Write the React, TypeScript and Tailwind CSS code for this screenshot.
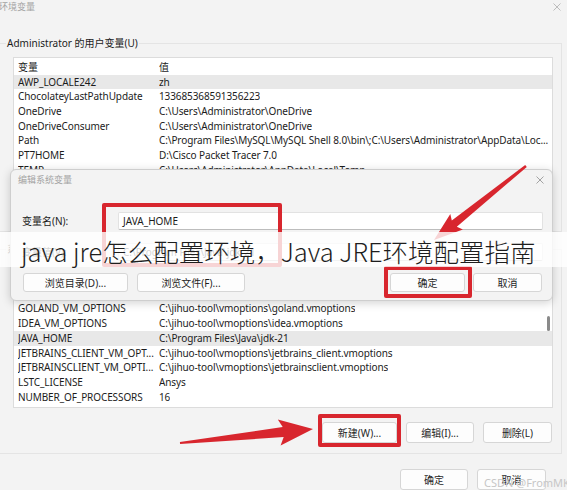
import React from "react";

const upperRows: [string, string][] = [
  ["变量", "值"],
  ["AWP_LOCALE242", "zh"],
  ["ChocolateyLastPathUpdate", "133685368591356223"],
  ["OneDrive", "C:\\Users\\Administrator\\OneDrive"],
  ["OneDriveConsumer", "C:\\Users\\Administrator\\OneDrive"],
  ["Path", "C:\\Program Files\\MySQL\\MySQL Shell 8.0\\bin\\;C:\\Users\\Administrator\\AppData\\Loc..."],
  ["PT7HOME", "D:\\Cisco Packet Tracer 7.0"],
  ["TEMP", "C:\\Users\\Administrator\\AppData\\Local\\Temp"],
  ["TMP", "C:\\Users\\Administrator\\AppData\\Local\\Temp"],
];

const lowerRows: [string, string][] = [
  ["变量", "值"],
  ["DriverData", "C:\\Windows\\System32\\Drivers\\DriverData"],
  ["GOLAND_VM_OPTIONS", "C:\\jihuo-tool\\vmoptions\\goland.vmoptions"],
  ["IDEA_VM_OPTIONS", "C:\\jihuo-tool\\vmoptions\\idea.vmoptions"],
  ["JAVA_HOME", "C:\\Program Files\\Java\\jdk-21"],
  ["JETBRAINS_CLIENT_VM_OPT...", "C:\\jihuo-tool\\vmoptions\\jetbrains_client.vmoptions"],
  ["JETBRAINSCLIENT_VM_OPTI...", "C:\\jihuo-tool\\vmoptions\\jetbrainsclient.vmoptions"],
  ["LSTC_LICENSE", "Ansys"],
  ["NUMBER_OF_PROCESSORS", "16"],
];

function Row({ a, b, hl }: { a: string; b: string; hl?: boolean }) {
  return (
    <div className={`flex h-[14.7px] items-center whitespace-nowrap pl-[4px] tracking-[-0.1px] ${hl ? "bg-[#e8e8e8]" : ""}`}>
      <span className="w-[141px] shrink-0 overflow-hidden">{a}</span>
      <span className="overflow-hidden">{b}</span>
    </div>
  );
}

function Btn({ w, h = "h-[21px]", children }: { w: string; h?: string; children: React.ReactNode }) {
  return (
    <div className={`${w} ${h} flex shrink-0 items-center justify-center rounded-[3px] border border-[#d6d6d6] bg-[#fdfdfd] text-[10px] leading-none text-[#1f1f1f]`}>
      {children}
    </div>
  );
}

function XIcon({ color }: { color: string }) {
  return (
    <svg width="8" height="8" viewBox="0 0 8 8">
      <path d="M0.5 0.5 L7.5 7.5 M7.5 0.5 L0.5 7.5" stroke={color} strokeWidth="0.9" />
    </svg>
  );
}

export default function App() {
  return (
    <div className="relative h-[490px] w-[567px] overflow-hidden bg-[#f3f3f3] font-['Noto_Sans','Noto_Sans_CJK_SC',sans-serif] text-[10px] text-[#1c1c1c]">
      {/* main window title */}
      <div className="flex h-[13px] items-center justify-between pr-[6px]">
        <span className="-ml-[1px] text-[9px] leading-[13px] text-[#a3a3a3]">环境变量</span>
        <XIcon color="#b5b5b5" />
      </div>

      {/* user variables group */}
      <div className="ml-[-2px] mt-[30px] flex h-[189px] w-[564px] flex-col border border-[#e4e4e4]">
        <div className="-mt-[8px] ml-[7px] w-fit bg-[#f3f3f3] px-[1px] leading-[14px]">Administrator 的用户变量(U)</div>
        <div className="ml-[14px] mt-[7px] h-[140px] w-[540px] overflow-hidden border border-[#dcdcdc] bg-white pt-[2px]">
          {upperRows.map((r, i) => (
            <Row key={i} a={r[0]} b={r[1]} hl={i === 1} />
          ))}
        </div>
        <div className="mt-[8px] flex justify-end gap-[9px] pr-[9px]">
          <Btn w="w-[75px]">新建(N)...</Btn>
          <Btn w="w-[68px]">编辑(E)...</Btn>
          <Btn w="w-[69px]">删除(D)</Btn>
        </div>
      </div>

      {/* system variables group */}
      <div className="ml-[-2px] mt-[17px] flex h-[205px] w-[564px] flex-col border border-[#e4e4e4]">
        <div className="-mt-[8px] ml-[7px] w-fit bg-[#f3f3f3] px-[1px] leading-[14px]">系统变量(S)</div>
        <div className="relative ml-[14px] mt-[13px] h-[139px] w-[540px] overflow-hidden border border-[#dcdcdc] bg-white pt-[2.25px]">
          {lowerRows.map((r, i) => (
            <Row key={i} a={r[0]} b={r[1]} hl={i === 4} />
          ))}
          <div className="absolute left-[533px] top-[46px] h-[15px] w-[3px] rounded-full bg-[#8a8a8a]" />
        </div>
        <div className="mt-[14px] flex justify-end gap-[9px] pr-[9px]">
          <Btn w="w-[75px]">新建(W)...</Btn>
          <Btn w="w-[68px]">编辑(I)...</Btn>
          <Btn w="w-[69px]">删除(L)</Btn>
        </div>
      </div>

      {/* bottom buttons */}
      <div className="mt-[15px] flex justify-end gap-[9px] pr-[21px]">
        <Btn w="w-[68px]">确定</Btn>
        <Btn w="w-[69px]">取消</Btn>
      </div>

      {/* edit dialog overlay */}
      <div className="absolute left-[10px] top-[169px] flex h-[132px] w-[543px] flex-col rounded-[6px] border border-[#cecece] bg-[#f3f3f3] shadow-[0_2px_10px_rgba(0,0,0,0.18)]">
        <div className="flex h-[20px] items-center justify-between pl-[7px] pr-[8px]">
          <span className="text-[9px] text-[#a3a3a3]">编辑系统变量</span>
          <XIcon color="#9a9a9a" />
        </div>
        <div className="mt-[22px] flex h-[18px] items-center">
          <span className="w-[107px] shrink-0 pl-[11px]">变量名(N):</span>
          <div className="mr-[9px] flex h-[18px] flex-1 items-center rounded-[2px] border border-[#e2e2e2] border-b-[#bdbdbd] bg-white pl-[4px]">JAVA_HOME</div>
        </div>
        <div className="mt-[13px] flex h-[18px] items-center">
          <span className="w-[107px] shrink-0 pl-[11px]">变量值(V):</span>
          <div className="mr-[9px] flex h-[18px] flex-1 items-center rounded-[2px] border border-[#e2e2e2] border-b-[#bdbdbd] bg-white pl-[4px]">C:\Program Files\Java\jdk-21</div>
        </div>
        <div className="mt-[12px] flex pl-[12px] pr-[10px]">
          <Btn w="w-[105px]" h="h-[19px]">浏览目录(D)...</Btn>
          <div className="ml-[9px]">
            <Btn w="w-[108px]" h="h-[19px]">浏览文件(F)...</Btn>
          </div>
          <div className="ml-auto">
            <Btn w="w-[75px]" h="h-[19px]">确定</Btn>
          </div>
          <div className="ml-[8px]">
            <Btn w="w-[69px]" h="h-[19px]">取消</Btn>
          </div>
        </div>
      </div>

      {/* red annotation boxes */}
      <div className="absolute left-[102px] top-[203px] h-[64px] w-[180px] rounded-[2px] border-[4px] border-[#d8262e]" />
      <div className="absolute left-[384px] top-[266px] h-[32px] w-[88px] rounded-[2px] border-[4px] border-[#d8262e]" />
      <div className="absolute left-[318px] top-[414px] h-[33px] w-[83px] rounded-[2px] border-[4px] border-[#d8262e]" />

      {/* top arrow */}
      <svg className="pointer-events-none absolute left-0 top-0" width="567" height="490" viewBox="0 0 567 490">
        <polygon
          points="526.8,166.9 456.8,226.8 462.9,229.6 434,240 450.3,214 451.8,220.6 525.2,165.1"
          fill="#d8262e"
        />
      </svg>

      {/* title band */}
      <div className="absolute left-0 top-[232px] flex h-[35px] w-full items-center bg-white/80 pl-[21px] pt-[3px] font-['Noto_Sans_CJK_SC',sans-serif] text-[25.5px] font-extralight leading-none whitespace-nowrap text-[#1e1e1e]">
        java jre怎么配置环境，Java JRE环境配置指南
      </div>

      {/* bottom arrow */}
      <svg className="pointer-events-none absolute left-0 top-0" width="567" height="490" viewBox="0 0 567 490">
        <polygon
          points="180.1,444 283.7,437.1 280.6,445.4 313,429 277.8,419.6 282.7,427.1 179.9,442"
          fill="#d8262e"
        />
      </svg>

      {/* watermark */}
      <div className="absolute left-[484px] top-[477px] whitespace-nowrap text-[11px] leading-none text-[#c6c6c6]">CSDN @FromMKl</div>
    </div>
  );
}
